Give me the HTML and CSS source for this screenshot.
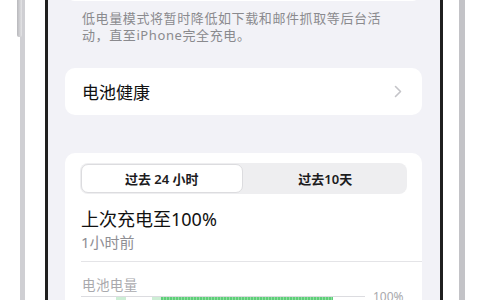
FILE: index.html
```html
<!DOCTYPE html>
<html lang="zh-CN">
<head>
    <meta charset="UTF-8">
    <meta name="viewport" content="width=device-width, initial-scale=1.0">
    <title>电池</title>
    <link rel="stylesheet" href="styles.css">
</head>
<body>
    <div class="phone">
        <div class="side-button"></div>
        <div class="screen">
            <div class="card card-top"></div>
            <p class="footnote">低电量模式将暂时降低如下载和邮件抓取等后台活<br>动，直至iPhone完全充电。</p>

            <div class="card row">
                <span>电池健康</span>
                <svg class="chevron" width="8" height="13" viewBox="0 0 8 13"><path d="M1.5 1.5 L6.5 6.5 L1.5 11.5" fill="none" stroke="#c4c4c8" stroke-width="1.6" stroke-linecap="round" stroke-linejoin="round"/></svg>
            </div>

            <div class="card usage">
                <div class="segmented">
                    <div class="seg active">过去 24 小时</div>
                    <div class="seg">过去10天</div>
                </div>
                <div class="last-charge">上次充电至100%</div>
                <div class="ago">1小时前</div>
                <div class="sep"></div>
                <div class="chart-title">电池电量</div>
                <div class="chart">
                    <div class="chart-area">
                        <div class="bar" style="width:35px"></div>
                        <div class="bar light" style="width:10px"></div>
                        <div class="bar" style="width:26px"></div>
                        <div class="bar light" style="width:9px"></div>
                        <div class="bar full" style="width:172px"></div>
                    </div>
                    <span class="axis">100%</span>
                </div>
            </div>
        </div>
    </div>
</body>
</html>
```

FILE: styles.css
```css
* {
    margin: 0;
    padding: 0;
    box-sizing: border-box;
    font-family: "Noto Sans", "Noto Sans CJK SC", sans-serif;
}
body { background: #fff; overflow: hidden; height: 300px; }

.phone {
    position: relative;
    margin-left: 20px;
    width: 445px;
    height: 300px;
    background: #fff;
    border-left: 5px solid #cfcfd3;
    border-right: 6px solid #c3c3c7;
    padding: 0 16px 0 20px;
}
.side-button {
    position: absolute;
    left: -8px; top: 0;
    width: 5px; height: 37px;
    background: linear-gradient(90deg, #b8b8bc, #e4e4e6);
    border-radius: 0 0 2px 2px;
}
.screen {
    height: 300px;
    background: #f2f2f7;
    border-left: 3px solid #1f1f1f;
    border-right: 3px solid #1f1f1f;
    padding: 0 18px 0 17px;
    overflow: hidden;
}

.card { background: #fff; border-radius: 10px; }
.card-top { height: 20px; margin-top: -19px; }

.footnote {
    margin-top: 9px;
    padding: 0 17px;
    font-size: 13px;
    line-height: 17px;
    letter-spacing: 0.6px;
    white-space: nowrap;
    color: #8a8a8e;
}

.row {
    margin-top: 24px;
    height: 47px;
    display: flex;
    align-items: center;
    justify-content: space-between;
    padding: 0 20px 0 17px;
    font-size: 17px;
    color: #111;
}

.usage { margin-top: 38px; padding: 10px 15px 20px 15px; }
.segmented {
    display: grid;
    grid-template-columns: 1fr 1fr;
    height: 31px;
    background: #eeeef0;
    border-radius: 8px;
}
.seg {
    display: flex;
    align-items: center;
    justify-content: center;
    font-size: 13px;
    font-weight: 600;
    color: #1c1c1e;
}
.seg.active {
    background: #fff;
    border: 1px solid #dcdcdf;
    border-radius: 7px;
    margin: 1px;
}

.last-charge {
    margin-top: 13px;
    padding-left: 1px;
    font-size: 18px;
    line-height: 24px;
    color: #111;
}
.ago {
    margin-top: 1px;
    padding-left: 1px;
    font-size: 15px;
    line-height: 20px;
    color: #8e8e93;
}
.sep { margin: 9px -15px 0 1px; height: 1px; background: #e4e4e7; }

.chart-title {
    margin-top: 14px;
    padding-left: 2px;
    font-size: 13.5px;
    line-height: 18px;
    letter-spacing: 0.4px;
    color: #a9a9ad;
}
.chart { display: flex; align-items: flex-start; margin-top: 2px; padding-left: 1px; }
.chart-area {
    display: flex;
    width: 284px;
    height: 30px;
    border-top: 1px solid #dcdce0;
}
.bar { height: 30px; }
.bar.light { background: #cdeed5; }
.bar.full { background: repeating-linear-gradient(90deg, #5ecf78 0 2px, #8fdfa2 2px 3px); }
.axis { margin-left: 8px; margin-top: -6px; font-size: 12px; line-height: 14px; color: #a9a9ad; }
```
